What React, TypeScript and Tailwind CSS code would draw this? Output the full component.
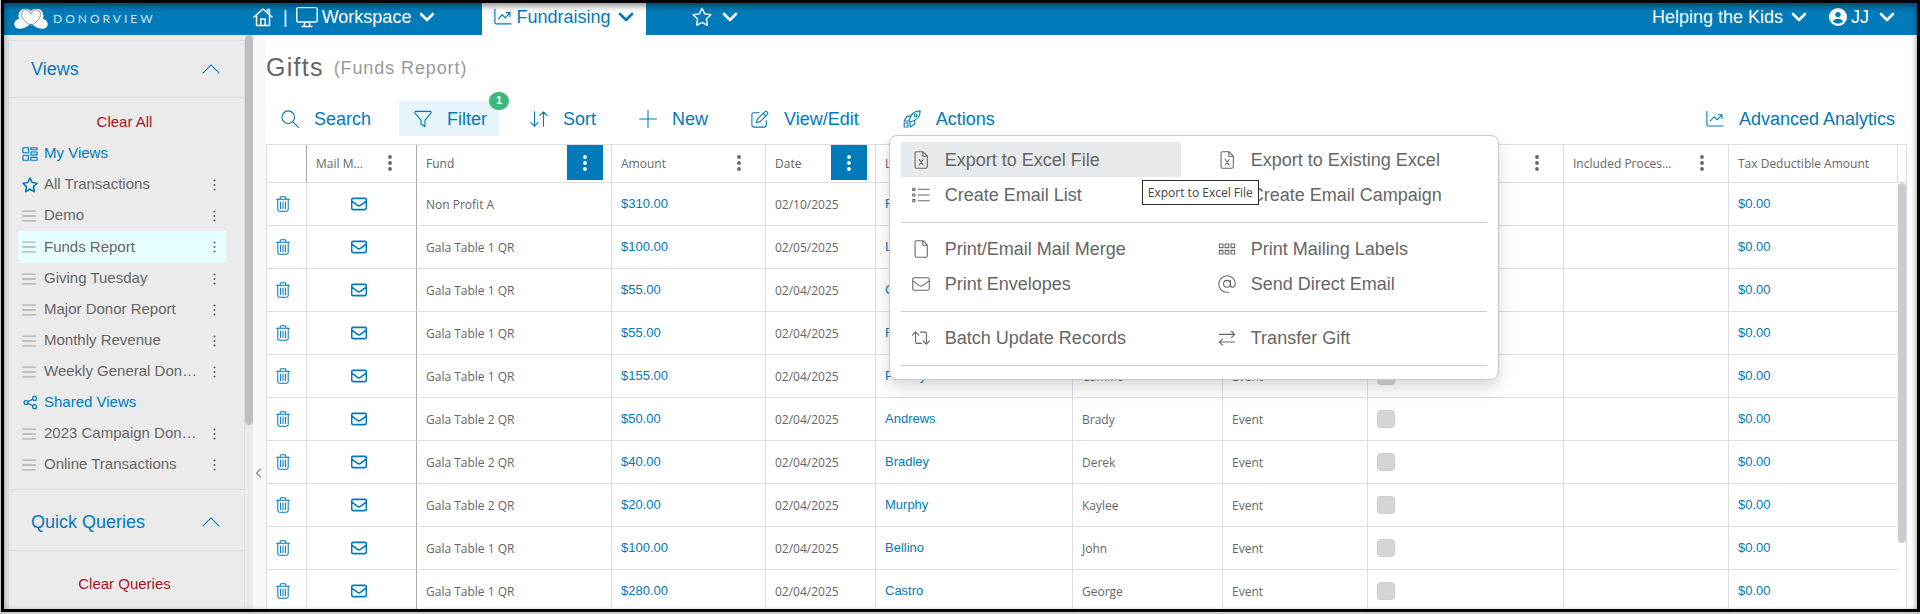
import type { ReactNode } from "react";

type IconProps = { className?: string; stroke?: number; children?: ReactNode };

function Icon({ className = "size-5", stroke = 1.2, children }: IconProps) {
  return (
    <svg
      className={`shrink-0 ${className}`}
      viewBox="0 0 20 20"
      fill="none"
      stroke="currentColor"
      strokeWidth={stroke}
      strokeLinecap="round"
      strokeLinejoin="round"
      aria-hidden="true"
    >
      {children}
    </svg>
  );
}

const shapes = {
  home: (
    <>
      <path d="M1 10 10 2l9 8M3.500 8v10.500h13V8M14.500 5.500V2.500H16.500V7.500" />
      <path d="M7.800 18.500v-6.500h4.400v6.500" />
    </>
  ),
  monitor: <path d="M2 1.500h16q1.300 0 1.300 1.300v10.400q0 1.300-1.300 1.300H2q-1.300 0-1.300-1.300V2.800Q.7 1.500 2 1.500ZM8 14.500l-.6 4M12 14.500l.6 4M5.500 18.600h9" />,
  chart: <path d="M1 1.500v14.700q0 1.500 1.500 1.500H19M5 12l4-4.500 3.500 3.500 5-5.500M13.500 5.200h4.300v4.300" />,
  chevron: <path d="m4 7 6 6 6-6" />,
  up: <path d="m1 14.500 9-9 9 9" />,
  left: <path d="m13 3-7 7 7 7" />,
  star: <path d="m10 1.300 2.700 5.600 6.100.9-4.400 4.300 1 6.200L10 15.400l-5.400 2.900 1-6.200L1.200 7.800l6.100-.9Z" />,
  views: (
    <>
      <path d="M1.200 2.200h6.800v6.300H1.200zM1.200 11.500h6.800v6.300H1.200zM11 7.500h7.800v3.600H11zM11 14.200h7.800v3.600H11zM11 2.200h7.800v2.500H11z" />
    </>
  ),
  share: (
    <>
      <circle cx="4" cy="10" r="2.600" />
      <circle cx="15.500" cy="4.500" r="2.600" />
      <circle cx="15.500" cy="15.500" r="2.600" />
      <path d="m6.400 8.800 6.700-3.200M6.400 11.200l6.700 3.200" />
    </>
  ),
  search: (
    <>
      <circle cx="8" cy="8" r="7" />
      <path d="m13 13 6.300 6.300" />
    </>
  ),
  filter: <path d="M1.500 1.500h17q1 .8.400 1.700L12.200 11.500v7L7.800 15.500v-4L1.100 3.200Q.6 2.300 1.500 1.500Z" />,
  sort: <path d="M5 2v16M1 14l4 4 4-4M15 18V2M11 6l4-4 4 4" />,
  plus: <path d="M10 .7v18.600M.7 10h18.600" />,
  edit: <path d="M9 3H3.200Q1 3 1 5.200v11.600Q1 19 3.200 19h11.600q2.200 0 2.200-2.200V12M7 10.200l8.200-8.200q1.200-1.200 2.500 0l.4.400q1.200 1.200 0 2.500l-8.200 8.200-3.800.9Zm6.500-6.500 2.900 2.900" />,
  rocket: (
    <>
      <path d="M6.800 12.500C8 5.500 12.500 1 19 1c.2 6.500-4.500 11-11.300 12.300ZM8.300 6.800H4.500L1.200 12.200l5.400.1M13.200 11.700v3.800l-5.200 3.300-.2-5.400" />
      <path d="M1.300 14.500h4.200v4.300H1.300z" />
      <circle cx="14" cy="6" r="1.500" />
    </>
  ),
  excel: <path d="M5 .8h7.200L17 5.600v12q0 1.600-1.600 1.600H5q-1.600 0-1.600-1.600V2.400Q3.400.8 5 .8ZM12 1v4.800h5M8 9.500l4.400 6M12.400 9.500 8 15.500" />,
  file: <path d="M5 .8h7.200L17 5.600v12q0 1.600-1.600 1.600H5q-1.600 0-1.600-1.600V2.400Q3.400.8 5 .8ZM12 1v4.800h5" />,
  list: <path d="M.8 2.500h2.400v2.400H.8zM.8 8.800h2.400v2.400H.8zM.8 15.100h2.400v2.400H.8zM7 3.700h12.200M7 10h12.200M7 16.300h12.200" />,
  mail: <path d="M2.800 3h14.400Q19.200 3 19.200 5v10q0 2-2 2H2.800q-2 0-2-2V5q0-2 2-2ZM1 6.500l7.200 5.300q1.800 1.200 3.600 0L19 6.500" />,
  labels: <path d="M1.500 4.500h4v4h-4zM8 4.500h4v4H8zM14.500 4.500h4v4h-4zM1.500 11.500h4v4h-4zM8 11.500h4v4H8zM14.500 11.500h4v4h-4z" />,
  at: (
    <>
      <circle cx="10" cy="9.800" r="3.800" />
      <path d="M13.800 6v5q0 2.600 2.400 2.600 3-.4 3-4A9.200 9.200 0 1 0 10 19.200h2" />
    </>
  ),
  batch: <path d="M.2 7 4 3.200 7.800 7M4 3.500V14.500q0 1.500 1.500 1.500H10.500M19.800 13 16 16.800 12.200 13M16 16.500V5q0-1.500-1.500-1.500H9.500" />,
  transfer: <path d="M1.500 6h17M15 2.500 18.500 6 15 9.500M18.500 14.500h-17M5 11 1.500 14.500 5 18" />,
  trash: <path d="M2 4h16M6.500 4V2.200q0-1.200 1.200-1.200h4.600q1.200 0 1.200 1.200V4M3.500 4v13q0 2 2 2h9q2 0 2-2V4M7 7.500v8M10 7.500v8M13 7.500v8" />,
  menu: <path d="M1 3h18M1 10h18M1 17h18" />,
};

function Dots({ className = "", r = 1.9 }: { className?: string; r?: number }) {
  return (
    <svg className={`shrink-0 ${className}`} viewBox="0 0 4 16" fill="currentColor" aria-hidden="true">
      <circle cx="2" cy="2" r={r} />
      <circle cx="2" cy="8" r={r} />
      <circle cx="2" cy="14" r={r} />
    </svg>
  );
}

function Logo() {
  return (
    <svg className="h-[22px] w-[34px]" viewBox="0 0 34 22" aria-hidden="true">
      <path
        fill="#fff"
        d="M17 3C19 .5 23 0 26 1.500c3.500 2 4 6.500 3 9.500 3 .5 5 3 4.800 5.500-.3 3-3 4.500-6 4.300-4-.2-7.500-2.300-10.800-5.300C13.700 18.500 10.200 20.600 6.200 20.800c-3 .2-5.700-1.300-6-4.300C0 14 2 11.500 5 11 4 8 4.500 3.500 8 1.500 11 0 15 .5 17 3Z"
      />
      <path
        fill="none"
        stroke="#8f8fc0"
        strokeWidth="1"
        d="M8 9C6.800 5 8.500 2 11.500 1.800c2.500 0 4.300 1.800 5.500 4.200 1.200-2.400 3-4.200 5.500-4.200C25.500 2 27.200 5 26 9c-1.300 3.500-5.500 6.500-9 8.500C13.500 15.500 9.300 12.500 8 9Z"
      />
    </svg>
  );
}

function Chevron() {
  return <Icon className="size-5" stroke={2.6}>{shapes.chevron}</Icon>;
}

const myViews = [
  "All Transactions",
  "Demo",
  "Funds Report",
  "Giving Tuesday",
  "Major Donor Report",
  "Monthly Revenue",
  "Weekly General Don…",
];
const sharedViews = ["2023 Campaign Don…", "Online Transactions"];

function ViewItem({ name }: { name: string }) {
  const active = name === "Funds Report";
  const starred = name === "All Transactions";
  return (
    <li
      className={`flex items-center pl-1 pr-2 ml-[9px] mr-[18px] ${
        active ? "h-8 bg-[#e6feff]" : "h-[31px]"
      }`}
    >
      <a href="#view" className="flex min-w-0 flex-1 items-center">
        <span className="flex w-[22px] shrink-0">
          {starred ? (
            <Icon className="size-4 text-[#007ab8]" stroke={2}>{shapes.star}</Icon>
          ) : (
            <Icon className="size-[14px] text-[#b0b0b0]" stroke={1.8}>{shapes.menu}</Icon>
          )}
        </span>
        <span className="whitespace-nowrap">{name}</span>
      </a>
      <button type="button" aria-label={`${name} options`} className="flex w-2 justify-center">
        <Dots className="h-3 w-[3px]" r={1.4} />
      </button>
    </li>
  );
}

function PanelHeader({ title }: { title: string }) {
  return (
    <button
      type="button"
      className="flex h-[57px] w-full items-center justify-between border-b border-[#dadfe5] pl-[22px] pr-6 text-lg text-[#007ab8]"
    >
      {title}
      <Icon className="size-[18px]">{shapes.up}</Icon>
    </button>
  );
}

function Sidebar() {
  return (
    <aside className="flex w-[249px] shrink-0 overflow-hidden bg-[#ebebeb] text-[15px] text-[#666]">
      <div className="ml-1 w-[237px] pt-[5px]">
        <section className="border border-[#dadfe5] pb-[9px]">
          <PanelHeader title="Views" />
          <div className="flex h-10 items-end justify-center pb-1 pr-1 text-[#a5141c]">
            <button type="button" className="leading-6">Clear All</button>
          </div>
          <h3 className="ml-[13px] flex h-[31px] items-center text-[#007ab8]">
            <span className="w-[22px]"><Icon className="size-4" stroke={1.4}>{shapes.views}</Icon></span>
            My Views
          </h3>
          <ul>{myViews.map((v) => <ViewItem key={v} name={v} />)}</ul>
          <h3 className="ml-[13px] flex h-[31px] items-center text-[#007ab8]">
            <span className="w-[22px] pl-px"><Icon className="size-[15px]" stroke={1.6}>{shapes.share}</Icon></span>
            Shared Views
          </h3>
          <ul>{sharedViews.map((v) => <ViewItem key={v} name={v} />)}</ul>
        </section>
        <section className="mt-1 h-40 border-x border-[#dadfe5]">
          <PanelHeader title="Quick Queries" />
          <div className="flex h-[67px] items-center justify-center pr-1 text-[#a5141c]">
            <button type="button">Clear Queries</button>
          </div>
        </section>
      </div>
      <div className="h-[390px] w-2 rounded-full bg-[#bfbfbf]" />
    </aside>
  );
}

function TopBar() {
  return (
    <header className="flex h-8 shrink-0 items-stretch bg-[#007ab8] pl-[10px] pr-4 text-lg leading-6 text-white">
      <a href="#home" className="flex w-[235px] items-center gap-[5px]">
        <Logo />
        <span className="font-[Lato,sans-serif] text-xs tracking-[3px] text-white/80">DONORVIEW</span>
      </a>
      <nav className="flex flex-1 items-stretch pb-1">
        <a href="#home" aria-label="Home" className="ml-1 flex items-center">
          <Icon className="size-5" stroke={1.5}>{shapes.home}</Icon>
        </a>
        <span className="ml-[10px] self-center">|</span>
        <button type="button" className="ml-2 flex items-center gap-1">
          <Icon className="size-[22px]" stroke={1.3}>{shapes.monitor}</Icon>
          <span>Workspace</span>
          <span className="ml-[2px] flex"><Chevron /></span>
        </button>
        <button
          type="button"
          className="-mb-1 ml-[45px] flex items-center gap-1 bg-white pb-1 pl-3 pr-[10px] text-[#007ab8]"
        >
          <Icon className="size-[18px]" stroke={1.3}>{shapes.chart}</Icon>
          <span>Fundraising</span>
          <span className="ml-[2px] flex"><Chevron /></span>
        </button>
        <button type="button" aria-label="Favorites" className="ml-[46px] flex items-center gap-2">
          <Icon className="size-5" stroke={1.4}>{shapes.star}</Icon>
          <Chevron />
        </button>
      </nav>
      <div className="flex items-center gap-5 pb-1 pr-1">
        <button type="button" className="flex items-center gap-[6px]">
          Helping the Kids
          <Chevron />
        </button>
        <button type="button" className="flex items-center gap-1">
          <svg className="size-[18px]" viewBox="0 0 18 18" aria-hidden="true">
            <circle cx="9" cy="9" r="9" fill="#fff" />
            <circle cx="9" cy="6.6" r="2.7" fill="#007ab8" />
            <path d="M4 13.500c.8-2 2.300-2.800 5-2.800s4.200.8 5 2.800c-3 2.800-7 2.800-10 0Z" fill="#007ab8" />
          </svg>
          JJ
          <span className="ml-1 flex"><Chevron /></span>
        </button>
      </div>
    </header>
  );
}

const menuGroups: { icon: ReactNode; label: string }[][] = [
  [
    { icon: shapes.excel, label: "Export to Excel File" },
    { icon: shapes.excel, label: "Export to Existing Excel" },
    { icon: shapes.list, label: "Create Email List" },
    { icon: shapes.mail, label: "Create Email Campaign" },
  ],
  [
    { icon: shapes.file, label: "Print/Email Mail Merge" },
    { icon: shapes.labels, label: "Print Mailing Labels" },
    { icon: shapes.mail, label: "Print Envelopes" },
    { icon: shapes.at, label: "Send Direct Email" },
  ],
  [
    { icon: shapes.batch, label: "Batch Update Records" },
    { icon: shapes.transfer, label: "Transfer Gift" },
  ],
];

function ActionsMenu() {
  return (
    <div className="absolute left-px top-[34px] z-10 w-[610px] rounded-lg border border-[#c8cacc] bg-white px-[11px] pb-[5px] pt-[6px] text-[#666] shadow-[0_8px_16px_rgba(0,0,0,0.15)]">
      {menuGroups.map((group) => (
        <div
          key={group[0].label}
          className="mb-2 grid grid-cols-2 gap-x-[26px] border-b border-[#c8cacc] pb-[10px]"
        >
          {group.map((item) => {
            const active = item.label === "Export to Excel File";
            return (
              <div key={item.label} className="relative">
                <button
                  type="button"
                  className={`flex h-[35px] w-full items-center gap-[15px] pl-[11px] ${
                    active ? "bg-[#e6eaed]" : ""
                  }`}
                >
                  <Icon className="size-[18px]">{item.icon}</Icon>
                  {item.label}
                </button>
                {active && (
                  <div
                    role="tooltip"
                    className="absolute left-[241px] top-[38px] z-20 flex h-[25px] items-center whitespace-nowrap border border-[#2b2b2b] bg-white px-[5px] font-['Open_Sans',sans-serif] text-xs text-[#444]"
                  >
                    Export to Excel File
                  </div>
                )}
              </div>
            );
          })}
        </div>
      ))}
    </div>
  );
}

function ToolButton({ icon, label, badge }: { icon: ReactNode; label: string; badge?: number }) {
  return (
    <button
      type="button"
      className={`relative flex h-[35px] items-center gap-[15px] pl-[15px] pr-3 ${badge ? "bg-[#e6f4fc]" : ""}`}
    >
      <Icon className="size-[18px]">{icon}</Icon>
      {label}
      {badge && (
        <span className="absolute -right-[10px] -top-[9px] flex h-[18px] w-5 items-center justify-center rounded-full bg-[#3cb878] text-[11px] font-bold text-white">
          {badge}
        </span>
      )}
    </button>
  );
}

function Toolbar() {
  return (
    <div className="flex items-center justify-between text-lg text-[#007ab8]">
      <div className="flex items-center gap-4">
        <ToolButton icon={shapes.search} label="Search" />
        <ToolButton icon={shapes.filter} label="Filter" badge={1} />
        <ToolButton icon={shapes.sort} label="Sort" />
        <ToolButton icon={shapes.plus} label="New" />
        <ToolButton icon={shapes.edit} label="View/Edit" />
        <div className="relative ml-px">
          <ToolButton icon={shapes.rocket} label="Actions" />
          <ActionsMenu />
        </div>
      </div>
      <ToolButton icon={shapes.chart} label="Advanced Analytics" />
    </div>
  );
}

const columns = [
  { title: "", width: "w-[40px]", menu: "none" },
  { title: "Mail M…", width: "w-[110px]", menu: "plain" },
  { title: "Fund", width: "w-[195px]", menu: "active" },
  { title: "Amount", width: "w-[154px]", menu: "plain" },
  { title: "Date", width: "w-[110px]", menu: "active" },
  { title: "L", width: "w-[197px]", menu: "plain" },
  { title: "", width: "w-[150px]", menu: "plain" },
  { title: "", width: "w-[145px]", menu: "plain" },
  { title: "", width: "w-[196px]", menu: "plain" },
  { title: "Included Proces…", width: "w-[165px]", menu: "plain" },
  { title: "Tax Deductible Amount", width: "w-auto", menu: "none" },
];

const gifts = [
  { fund: "Non Profit A", amount: "$310.00", date: "02/10/2025", last: "F", first: "", type: "" },
  { fund: "Gala Table 1 QR", amount: "$100.00", date: "02/05/2025", last: "L", first: "", type: "" },
  { fund: "Gala Table 1 QR", amount: "$55.00", date: "02/04/2025", last: "C", first: "", type: "" },
  { fund: "Gala Table 1 QR", amount: "$55.00", date: "02/04/2025", last: "F", first: "", type: "" },
  { fund: "Gala Table 1 QR", amount: "$155.00", date: "02/04/2025", last: "Pronny", first: "Camille", type: "Event" },
  { fund: "Gala Table 2 QR", amount: "$50.00", date: "02/04/2025", last: "Andrews", first: "Brady", type: "Event" },
  { fund: "Gala Table 2 QR", amount: "$40.00", date: "02/04/2025", last: "Bradley", first: "Derek", type: "Event" },
  { fund: "Gala Table 2 QR", amount: "$20.00", date: "02/04/2025", last: "Murphy", first: "Kaylee", type: "Event" },
  { fund: "Gala Table 1 QR", amount: "$100.00", date: "02/04/2025", last: "Bellino", first: "John", type: "Event" },
  { fund: "Gala Table 1 QR", amount: "$280.00", date: "02/04/2025", last: "Castro", first: "George", type: "Event" },
];

const cell = "h-[43px] border-b border-r border-[#dadde2] pl-[9px] pr-2 pt-[2px]";
const linkCell = "h-[43px] border-b border-r border-[#dadde2] pl-[9px] pr-2";
const link = "block font-['Liberation_Sans',sans-serif] text-[13px] text-[#007ab8]";

function GiftsTable() {
  return (
    <div className="mt-2 flex min-h-0 flex-1 items-start overflow-hidden border-l border-r border-t border-[#dadde2]">
      <div className="min-w-0 flex-1">
        <table className="w-full table-fixed border-separate border-spacing-0 text-left font-['Open_Sans',sans-serif] text-xs text-[#666]">
          <thead>
            <tr>
              {columns.map((col, i) => (
                <th
                  key={i}
                  className={`h-[38px] border-b border-r border-b-[#dadde2] p-0 font-normal ${
                    i < 2 ? "border-r-[#a9a9a9]" : "border-r-[#dadde2]"
                  } ${col.width}`}
                >
                  <div className="flex h-[37px] items-start justify-between pl-[9px] pr-2">
                    <span className="whitespace-nowrap leading-[37px]">{col.title}</span>
                    {col.menu !== "none" && (
                      <button
                        type="button"
                        aria-label="Column menu"
                        className={`flex h-[35px] w-9 shrink-0 items-center justify-center ${
                          col.menu === "active" ? "bg-[#007ab8] text-white" : ""
                        }`}
                      >
                        <Dots className="h-4 w-1" />
                      </button>
                    )}
                  </div>
                </th>
              ))}
            </tr>
          </thead>
          <tbody>
            {gifts.map((gift, i) => (
              <tr key={i}>
                <td className="h-[43px] border-b border-r border-[#dadde2] text-[#007ab8]">
                  <button type="button" aria-label="Delete" className="flex w-full justify-center pr-2">
                    <Icon className="size-4" stroke={1.3}>{shapes.trash}</Icon>
                  </button>
                </td>
                <td className="h-[43px] border-b border-r border-b-[#dadde2] border-r-[#a9a9a9] text-[#007ab8]">
                  <button type="button" aria-label="Mail merge" className="flex w-full justify-center pr-[6px]">
                    <Icon className="size-4" stroke={2}>{shapes.mail}</Icon>
                  </button>
                </td>
                <td className={cell}>{gift.fund}</td>
                <td className={linkCell}><a href="#gift" className={link}>{gift.amount}</a></td>
                <td className={cell}>{gift.date}</td>
                <td className={linkCell}><a href="#donor" className={link}>{gift.last}</a></td>
                <td className={cell}>{gift.first}</td>
                <td className={cell}>{gift.type}</td>
                <td className={linkCell}>
                  <input
                    type="checkbox"
                    aria-label="Selected"
                    disabled
                    className="block size-[18px] appearance-none rounded-sm border border-[#cccccc] bg-[#d5d5d5]"
                  />
                </td>
                <td className={cell} />
                <td className="h-[43px] border-b border-[#dadde2] pl-[9px] pr-2">
                  <a href="#gift" className={link}>$0.00</a>
                </td>
              </tr>
            ))}
          </tbody>
        </table>
      </div>
      <div className="w-2 shrink-0">
        <div className="h-[38px] border-b border-[#dadde2]" />
        <div className="h-[360px] rounded-full bg-[#cccccc]" />
      </div>
    </div>
  );
}

export default function App() {
  return (
    <div className="h-screen overflow-hidden bg-[#c8c8c8] pb-[2px] pl-px font-['Liberation_Sans',Arial,sans-serif]">
      <div className="relative flex h-full flex-col overflow-hidden border-[3px] border-black bg-white">
        <TopBar />
        <div className="flex min-h-0 flex-1">
          <Sidebar />
          <button
            type="button"
            aria-label="Collapse sidebar"
            className="flex w-[13px] shrink-0 items-end bg-[#f9f9f9] pb-[130px] text-[#888]"
          >
            <Icon className="size-3" stroke={2}>{shapes.left}</Icon>
          </button>
          <main className="flex min-w-0 flex-1 flex-col pr-[10px]">
            <h1 className="flex h-[66px] items-center gap-[10px] text-[25px] tracking-wider text-[#666]">
              Gifts <small className="text-lg tracking-wider text-[#999]">(Funds Report)</small>
            </h1>
            <Toolbar />
            <GiftsTable />
          </main>
        </div>
        <div className="pointer-events-none absolute inset-0 z-30 shadow-[inset_0_3px_6px_rgba(0,0,0,0.45)]" />
      </div>
    </div>
  );
}
